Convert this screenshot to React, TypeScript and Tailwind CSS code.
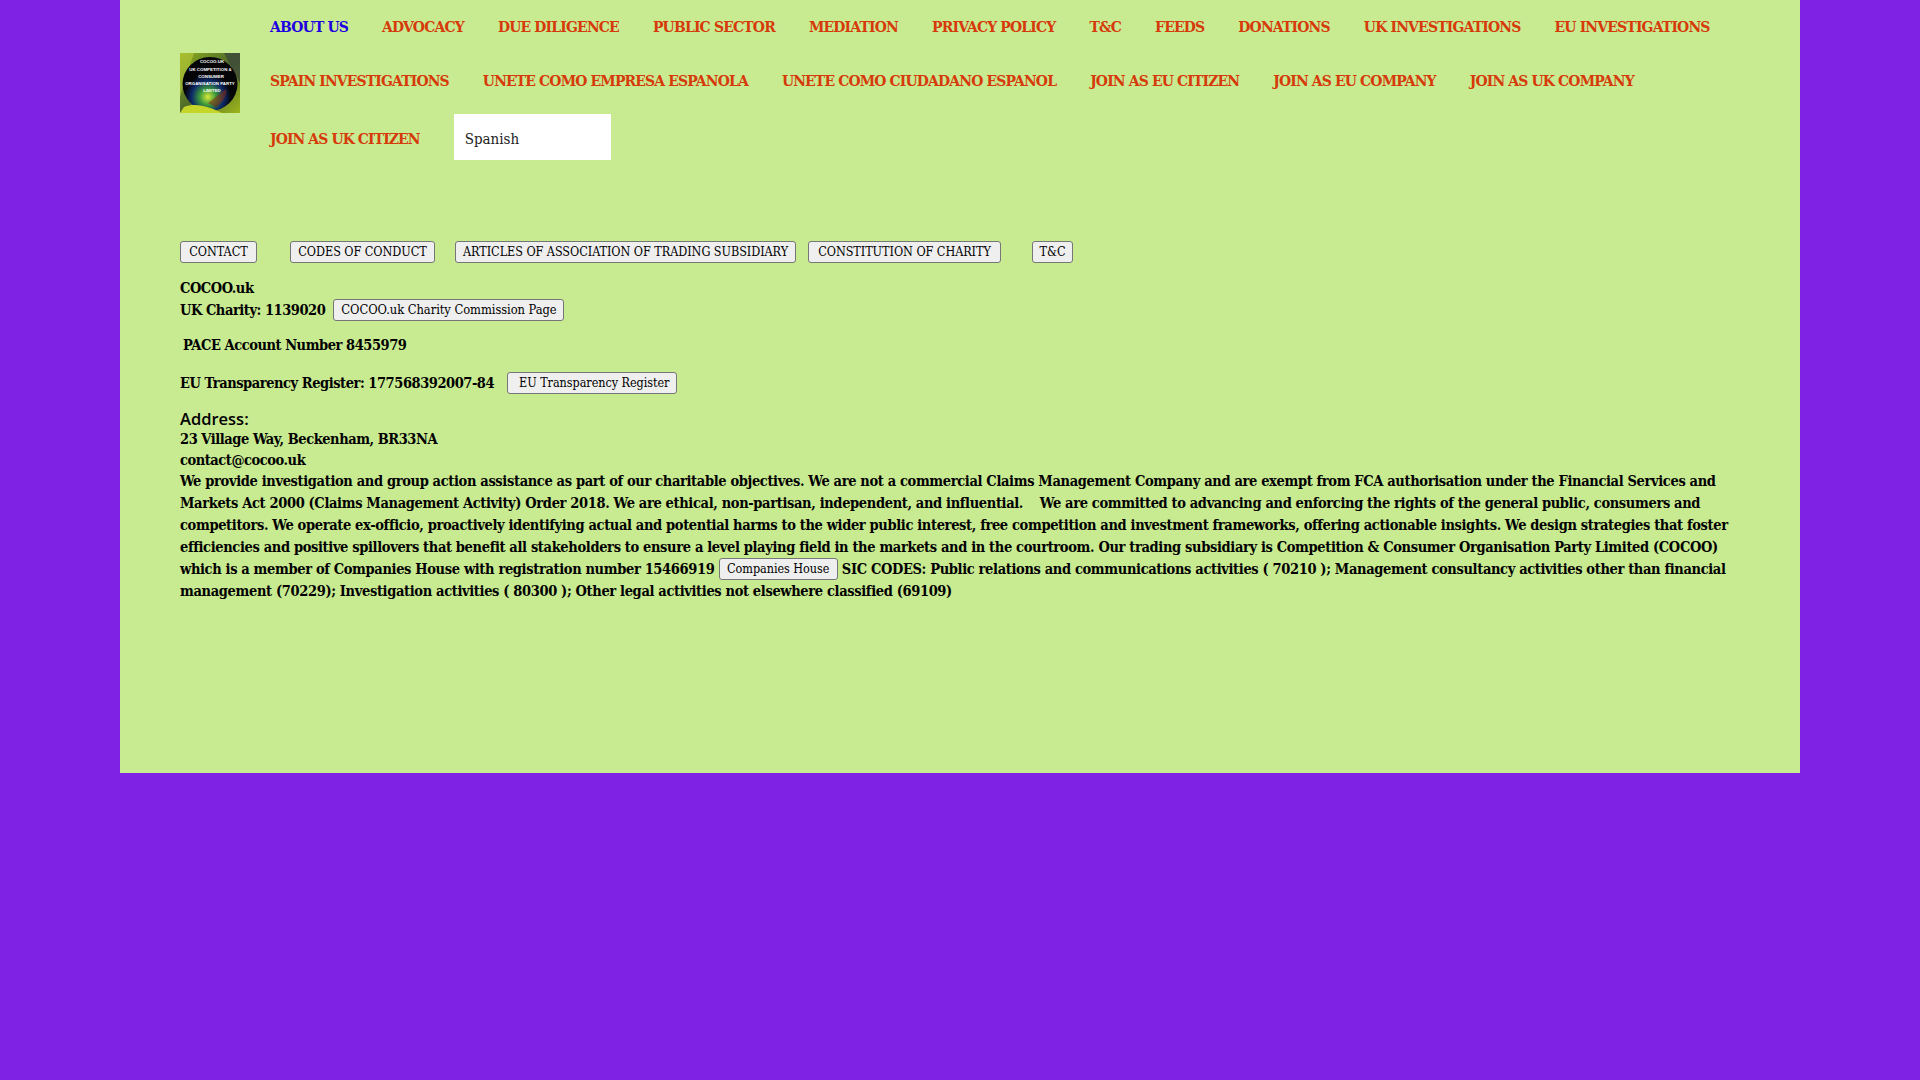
const nav = [
  ["ABOUT US", "text-[#1d00e0]"], ["ADVOCACY"], ["DUE DILIGENCE"], ["PUBLIC SECTOR"], ["MEDIATION"], ["PRIVACY POLICY"], ["T&C"], ["FEEDS"], ["DONATIONS"], ["UK INVESTIGATIONS"], ["EU INVESTIGATIONS"],
];
const nav2 = ["SPAIN INVESTIGATIONS", "UNETE COMO EMPRESA ESPANOLA", "UNETE COMO CIUDADANO ESPANOL", "JOIN AS EU CITIZEN", "JOIN AS EU COMPANY", "JOIN AS UK COMPANY"];

function Btn({ children, className = "" }: { children: React.ReactNode; className?: string }) {
  return <span className={"inline-block h-[22px] leading-[20px] text-center bg-[#efefef] border border-[#767676] rounded-[3px] text-[12.5px] tracking-[-0.05px] font-normal text-black whitespace-nowrap align-top " + className}>{children}</span>;
}

function Logo() {
  return (
    <svg width="60" height="60" viewBox="0 0 60 60" className="block">
      <defs>
        <linearGradient id="leaf" x1="0" y1="0" x2="1" y2="1">
          <stop offset="0" stopColor="#8fae1e" />
          <stop offset="0.5" stopColor="#4e6a2a" />
          <stop offset="1" stopColor="#9db51c" />
        </linearGradient>
        <radialGradient id="glow" cx="0.46" cy="0.74" r="0.42">
          <stop offset="0" stopColor="#d8e83a" />
          <stop offset="0.35" stopColor="#3d9a3a" />
          <stop offset="0.7" stopColor="#0d2a6a" />
          <stop offset="1" stopColor="#050508" />
        </radialGradient>
      </defs>
      <rect width="60" height="60" fill="url(#leaf)" />
      <path d="M0 0 L14 0 L4 30 L0 44 Z" fill="#b7c93a" opacity="0.6" />
      <path d="M44 0 L60 0 L60 30 Z" fill="#3d4a3a" opacity="0.8" />
      <ellipse cx="30" cy="31" rx="27.5" ry="27" fill="url(#glow)" />
      <path d="M46 36 C48 42 42 50 36 54 L28 50 Z" fill="#8a2a10" opacity="0.55" />
      <path d="M4 54 C16 49 30 54 42 60 L0 60 Z" fill="#c5d52a" />
      <g fill="#ffffff" fontSize="4.4" fontFamily="'Liberation Sans',sans-serif" fontWeight="700" textAnchor="middle">
        <text x="32" y="10">COCOO.UK</text>
        <text x="30.5" y="18">UK COMPETITION &amp;</text>
        <text x="31" y="24.5">CONSUMER</text>
        <text x="30" y="31.5">ORGANISATION PARTY</text>
        <text x="32" y="38.5">LIMITED</text>
      </g>
    </svg>
  );
}

export default function App() {
  return (
    <div className="min-h-[1080px] bg-[#8022e3] font-['DejaVu_Serif_Condensed','DejaVu_Serif',serif]">
      <div className="mx-[120px] w-[1680px] h-[773px] bg-[#c8ea91] px-[60px] text-black">
        <div className="flex">
          <div className="w-[90px] pt-[53px] shrink-0">
            <Logo />
          </div>
          <div className="flex-1 text-[15.5px] tracking-[-0.85px] font-bold text-[#d63a0a]">
            <div className="flex gap-[34px] h-[53px] items-center tracking-[-0.82px]">
              {nav.map(([t, c]) => <span key={t} className={"whitespace-nowrap " + (c || "")}>{t}</span>)}
            </div>
            <div className="flex gap-[34px] h-[54px] items-center pt-[1px]">
              {nav2.map((t) => <span key={t} className="whitespace-nowrap">{t}</span>)}
            </div>
            <div className="flex gap-[34px] items-center h-[46px] mt-[7px] pt-[3px] tracking-[-0.9px]">
              <span className="whitespace-nowrap">JOIN AS UK CITIZEN</span>
              <div className="w-[157px] h-[46px] -mt-[3px] bg-white px-[11px] pt-[4px] flex items-center text-[15px] tracking-normal font-normal text-[#222]">Spanish</div>
            </div>
          </div>
        </div>
        <div className="flex mt-[81px]">
          <Btn className="w-[77px] mr-[33px]">CONTACT</Btn>
          <Btn className="w-[145px] mr-[20px]">CODES OF CONDUCT</Btn>
          <Btn className="w-[341px] mr-[12px]">ARTICLES OF ASSOCIATION OF TRADING SUBSIDIARY</Btn>
          <Btn className="w-[193px] mr-[31px]">CONSTITUTION OF CHARITY</Btn>
          <Btn className="w-[41px]">T&amp;C</Btn>
        </div>
        <div className="text-[14.5px] tracking-[-0.45px] font-bold leading-[22px] mt-[14px]">
          <div>COCOO.uk</div>
          <div>UK Charity: 1139020 <Btn className="w-[231px] ml-[4px] text-[12.8px]">COCOO.uk Charity Commission Page</Btn></div>
          <div className="mt-[13px] pl-[3px]">PACE Account Number 8455979</div>
          <div className="mt-[16px]">EU Transparency Register: 177568392007-84 <Btn className="w-[170px] ml-[9px] pl-[4px]">EU Transparency Register</Btn></div>
          <div className="mt-[14px] font-['Open_Sans',sans-serif] font-semibold tracking-normal text-[16.5px] leading-[21px]">Address:</div>
          <div className="leading-[20px]">23 Village Way, Beckenham, BR33NA</div>
          <div className="leading-[21px]">contact@cocoo.uk</div>
          <div className="tracking-[-0.35px]">We provide investigation and group action assistance as part of our charitable objectives. We are not a commercial Claims Management Company and are exempt from FCA authorisation under the Financial Services and Markets Act 2000 (Claims Management Activity) Order 2018. We are ethical, non-partisan, independent, and influential. &nbsp;&nbsp; We are committed to advancing and enforcing the rights of the general public, consumers and competitors. We operate ex-officio, proactively identifying actual and potential harms to the wider public interest, free competition and investment frameworks, offering actionable insights. We design strategies that foster efficiencies and positive spillovers that benefit all stakeholders to ensure a level playing field in the markets and in the courtroom. Our trading subsidiary is Competition &amp; Consumer Organisation Party Limited (COCOO) which is a member of Companies House with registration number 15466919 <Btn className="w-[119px]">Companies House</Btn> SIC CODES: Public relations and communications activities ( 70210 ); Management consultancy activities other than financial management (70229); Investigation activities ( 80300 ); Other legal activities not elsewhere classified (69109)</div>
        </div>
      </div>
    </div>
  );
}
